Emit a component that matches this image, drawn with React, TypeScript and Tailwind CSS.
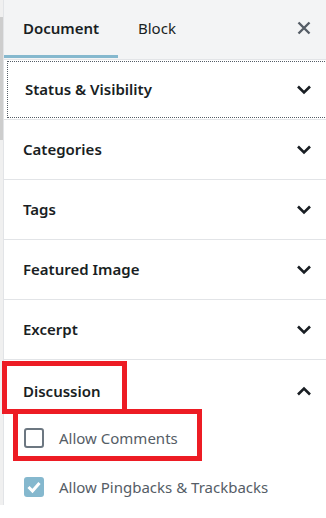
import React from "react";

const Chevron = ({ up = false }: { up?: boolean }) => (
  <svg width="16" height="10" viewBox="0 0 16 10" className="shrink-0">
    <path
      d={up ? "M2 8.5 L8 2.5 L14 8.5" : "M2 1.5 L8 7.5 L14 1.5"}
      fill="none"
      stroke="#191e23"
      strokeWidth="2.6"
    />
  </svg>
);

const Row = ({ title, focus = false }: { title: string; focus?: boolean }) => (
  <div className="h-[60px] border-b border-[#e2e4e7] flex overflow-hidden">
    <div
      className={
        "flex-1 flex items-center justify-between pl-[19px] pr-[14px] " +
        (focus ? "outline-1 outline-dotted outline-[#555d66] -outline-offset-2 ml-[2px] pl-[17px] -mr-[4px] pr-[18px]" : "")
      }
    >
      <span className="text-[15px] font-semibold text-[#191e23]">{title}</span>
      <Chevron />
    </div>
  </div>
);

export default function App() {
  return (
    <div
      className="w-[326px] h-[518px] bg-white overflow-hidden flex flex-col relative"
      style={{ fontFamily: '"Noto Sans", "Open Sans", sans-serif' }}
    >
      <div className="flex h-[505px]">
        <div className="w-[3px] bg-[#f0f0f0] flex flex-col pt-[17px]">
          <div className="h-[123px] bg-[#cdcdcd]" />
        </div>
        <div className="w-px bg-[#e2e4e7]" />
        <div className="flex-1 flex flex-col min-w-0">
          <div className="h-[60px] bg-[#f3f4f5] border-b border-[#e2e4e7] flex items-stretch">
            <div className="w-[114px] flex flex-col">
              <div className="flex-1 flex items-center pl-[19px] pt-[2px]">
                <span className="text-[15px] font-semibold text-[#191e23]">Document</span>
              </div>
              <div className="h-[3px] bg-[#85b8ce] mb-[1px]" />
            </div>
            <div className="flex items-center pl-[20px] pb-[2px]">
              <span className="text-[15px] text-[#191e23]">Block</span>
            </div>
            <div className="flex-1" />
            <div className="flex items-center pr-[15px] pb-[3px]">
              <svg width="14" height="14" viewBox="0 0 14 14">
                <path d="M1.5 1.5 L12.5 12.5 M12.5 1.5 L1.5 12.5" stroke="#555d66" strokeWidth="2.4" />
              </svg>
            </div>
          </div>
          <Row title="Status & Visibility" focus />
          <Row title="Categories" />
          <Row title="Tags" />
          <Row title="Featured Image" />
          <Row title="Excerpt" />
          <div className="h-[60px] flex items-center justify-between pl-[19px] pr-[14px] pt-[2px]">
            <span className="text-[15px] font-semibold text-[#191e23]">Discussion</span>
            <Chevron up />
          </div>
          <div className="flex flex-col pl-[20px] gap-[29px] pt-[8px]">
            <div className="flex items-center h-[20px]">
              <div className="w-[20px] h-[20px] border-2 border-[#6c7781] rounded-[3px]" />
              <span className="ml-[15px] text-[15px] text-[#555d66]">Allow Comments</span>
            </div>
            <div className="flex items-center h-[20px]">
              <div className="w-[20px] h-[20px] bg-[#85b8ce] rounded-[3px] flex items-center justify-center">
                <svg width="16" height="14" viewBox="0 0 16 14">
                  <path d="M2.5 7 L6.5 11 L13.5 3" fill="none" stroke="white" strokeWidth="3" />
                </svg>
              </div>
              <span className="ml-[15px] text-[15px] text-[#555d66]">Allow Pingbacks &amp; Trackbacks</span>
            </div>
          </div>
        </div>
      </div>
      <div className="absolute left-[2px] top-[361px] w-[125px] h-[53px] border-[5px] border-[#ed1c24]" />
      <div className="absolute left-[13px] top-[409px] w-[189px] h-[52px] border-[5px] border-[#ed1c24]" />
    </div>
  );
}
